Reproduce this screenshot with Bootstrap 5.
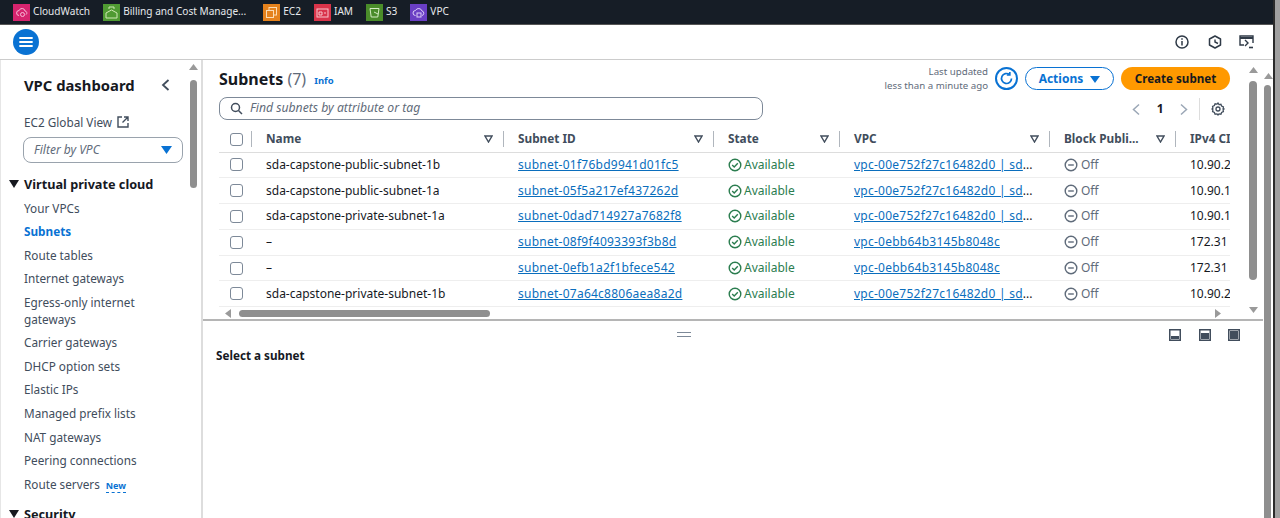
<!DOCTYPE html>
<html lang="en">
<head>
<meta charset="utf-8">
<title>Subnets | VPC Console</title>
<link href="https://cdn.jsdelivr.net/npm/bootstrap@5.3.0/dist/css/bootstrap.min.css" rel="stylesheet">
<style>
html,body{height:518px;overflow:hidden;background:#9a9a9a}
body{font-family:"Noto Sans","Open Sans",sans-serif;font-size:12px;color:#16191f}
.frame{height:518px}
.shell{width:1273px;flex:none;background:#fff}
.edge{width:2px;background:#2b2b2b;flex:none}
.tail{flex:1;background:#a0a0a0}
.svcbar{height:25px;background:#161d26;border-bottom:1px solid #555;color:#e6e9ec;font-size:10.1px;padding-left:13px;flex:none}
.svc{display:flex;align-items:center;gap:3px;margin-right:13px;white-space:nowrap}
.svc svg{display:block}
.svcwide{margin-right:17px}
.topbar{height:35px;border-bottom:1px solid #ccc;flex:none;padding-left:13px;padding-right:18px}
.burger{width:26px;height:26px;border-radius:50%;background:#0972d3;display:flex;align-items:center;justify-content:center}
.ticons{gap:17px}
.ticons svg:last-child{margin-left:-2px}
.sidewrap{width:203px;flex:none;border-right:2px solid #ddd;border-left:1px solid #e6e6e6;overflow:hidden}
.sidenav{width:188px;flex:none;overflow:hidden;padding-left:23px;padding-top:13px;color:#414d5c;font-size:11.75px}
.navtitle{font-size:14.8px;font-weight:700;color:#16191f;line-height:24px;width:146px}
.gview{line-height:16px;margin-top:17px}
.vfilter{width:160px;height:26px;border:1px solid #9aa3ad;border-radius:8px;margin-top:7px;margin-left:-1px;padding:0 10px;font-style:italic;color:#5f6b7a;font-size:12px}
.navhead{font-weight:700;font-size:12.7px;color:#16191f;line-height:18px;position:relative}
.navhead .caret{position:absolute;left:-15px;top:5px}
.navlist{margin:0;padding:0;list-style:none}
.navlist li{line-height:17px;padding:3.27px 0;width:130px}
.navlist .on{color:#0972d3;font-weight:700}
.newtag{font-size:9px;font-weight:700;color:#0972d3;border-bottom:1px dashed #0972d3;margin-left:6px}
.sbar{width:8px;flex:none;display:flex;flex-direction:column;align-items:center}
.thumb{width:7px;background:#8f8f8f;border-radius:4px}
.thumbh{height:7px;background:#8f8f8f;border-radius:4px}
.upper{height:261px;flex:none;border-bottom:2px solid #b5b5b5}
.pane{width:1046px;flex:none;padding-left:16px;padding-right:19px;display:flex;flex-direction:column}
.headrow{height:37px;flex:none}
.paneh1{font-size:16px;font-weight:700;color:#16191f;line-height:22px}
.paneh1 span.cnt{font-weight:400;color:#5f6b7a}
.infolink{font-size:9.5px;font-weight:700;color:#0972d3;margin-left:8px;line-height:18px}
.lastup{font-size:9.7px;line-height:14px;color:#5f6b7a;text-align:right;margin-right:7px}
.refresh{width:23px;height:23px;border-radius:50%;border:2px solid #0972d3;background:#fff;padding:0;display:flex;align-items:center;justify-content:center}
.btnact{height:23px;width:89px;border:1.5px solid #0972d3;border-radius:12px;color:#0972d3;font-weight:700;font-size:12px;padding:0;background:#fff;margin-left:7px}
.btncreate{height:23px;width:109px;border:0;border-radius:12px;background:#ff9900;color:#16191f;font-weight:700;font-size:11.6px;padding:0;margin-left:7px}
.searchrow{height:30px;flex:none}
.finder{width:544px;height:23px;border:1px solid #7d8998;border-radius:8px;padding:0 10px;font-style:italic;color:#5f6b7a;gap:7px;font-size:12.2px}
.pager{color:#16191f;font-weight:700;margin-top:1px;margin-right:5px}
.pagenum{margin:0 16.5px 0 17px}
.pagesep{width:1px;height:22px;background:#ddd;margin:0 11px}
.grid{table-layout:fixed;width:1011px;margin:0;font-size:12px;color:#16191f;--bs-table-bg:transparent}
.tablebox{width:1011px;overflow:hidden;height:180px;flex:none}
.grid th,.grid td{padding:0 0 0 14px;vertical-align:middle;white-space:nowrap;overflow:hidden;height:25.8px;border-bottom:1px solid #eee}
.grid th{height:25px;font-weight:700;font-size:11.8px;color:#414d5c;border-bottom:1px solid #ddd;position:relative}
.grid .chk{padding-left:11px}
.grid .form-check-input{width:13px;height:13px;margin:0;border:1px solid #7d8998;border-radius:3px;display:block}
.thin{display:flex;align-items:center;justify-content:space-between;padding-right:11px}
.thin::after{content:"";position:absolute;right:0;top:4px;height:16px;width:1px;background:#b0b6bd}
.thin svg{order:0}
.grid a{color:#0a6ebd;text-decoration:underline;letter-spacing:.25px}
.okst{color:#2b7d4f;display:flex;align-items:center;gap:2px}
.offst{color:#5f6b7a;display:flex;align-items:center;gap:3px}
.hscroll{height:12px;flex:none;padding-left:6px;padding-right:9px}
.lower{flex:1}
.grip{width:14px;height:5px;border-top:1px solid #7d8998;border-bottom:1px solid #7d8998}
.lowtop{height:27px;padding-left:13px;padding-right:23px}
.splitgrip{flex:1;display:flex;justify-content:center;padding-right:18px;margin-top:-1px}
.paneicons{gap:17.500px}
.selecttitle{font-weight:700;padding-left:13px;margin-top:-2px;line-height:18px;color:#16191f;font-size:11.7px}
.pageb{width:10px;flex:none;display:flex;flex-direction:column;align-items:flex-start;padding-left:1px;background:#fff}
</style>
</head>
<body>
<div class="frame d-flex">
  <div class="shell d-flex flex-column">
    <div class="svcbar d-flex align-items-center">
      <div class="svc"><svg width="17" height="17" viewBox="0 0 17 17"><rect width="17" height="17" fill="#d6246e"/><path d="M6 11.500a2.500 2.500 0 0 1 .2-5A3 3 0 0 1 12 7a2 2 0 0 1 1 3.600" fill="none" stroke="#f6b9d6" stroke-width="1"/><circle cx="9.500" cy="10.500" r="2" fill="none" stroke="#f6b9d6"/></svg><span>CloudWatch</span></div>
      <div class="svc svcwide"><svg width="17" height="17" viewBox="0 0 17 17"><rect width="17" height="17" fill="#4f9a32"/><path d="M3 9l5.500-3 5.500 3v5H3zM6 5V3h5v2" fill="none" stroke="#cfe8b4" stroke-width="1"/></svg><span>Billing and Cost Manage...</span></div>
      <div class="svc"><svg width="17" height="17" viewBox="0 0 17 17"><rect width="17" height="17" fill="#e5821c"/><rect x="6" y="3.500" width="7.500" height="7.500" fill="none" stroke="#fbdcb4"/><rect x="3.500" y="6.500" width="7" height="7" fill="#e5821c" stroke="#fbdcb4"/></svg><span>EC2</span></div>
      <div class="svc"><svg width="17" height="17" viewBox="0 0 17 17"><rect width="17" height="17" fill="#d9344a"/><rect x="3" y="5" width="11" height="8" fill="none" stroke="#f8c4cb"/><path d="M5 8h3v3H5zM10 9h2" fill="none" stroke="#f8c4cb"/></svg><span>IAM</span></div>
      <div class="svc"><svg width="17" height="17" viewBox="0 0 17 17"><rect width="17" height="17" fill="#4a8c2a"/><path d="M4 4.500h9l-1.200 8.500H5.200zM8 8l4 2" fill="none" stroke="#d5ecc4"/></svg><span>S3</span></div>
      <div class="svc"><svg width="17" height="17" viewBox="0 0 17 17"><rect width="17" height="17" fill="#6a3fc4"/><path d="M5.500 11.500a2.500 2.500 0 0 1 0-5A3.500 3.500 0 0 1 12 7a2.300 2.300 0 0 1 0 4.500" fill="none" stroke="#dccff7"/><rect x="7" y="9" width="4" height="4" fill="none" stroke="#dccff7"/></svg><span>VPC</span></div>
    </div>
    <div class="topbar d-flex align-items-center justify-content-between">
      <div class="burger"><svg width="14" height="12" viewBox="0 0 14 12"><path d="M1 2h12M1 6h12M1 10h12" stroke="#fff" stroke-width="1.800" stroke-linecap="round"/></svg></div>
      <div class="d-flex align-items-center ticons">
        <svg width="16" height="16" viewBox="0 0 16 16" fill="none" stroke="#2f3a47" stroke-width="1.500"><circle cx="8" cy="8" r="6"/><path d="M8 7v4.500M8 4.300v1.400"/></svg>
        <svg width="16" height="16" viewBox="0 0 16 16" fill="none" stroke="#2f3a47" stroke-width="1.500"><path d="M8 2l5.500 3v6L8 14l-5.500-3V5z" stroke-linejoin="round"/><path d="M8 5.500v2.500l3 1.500" stroke-width="1.400"/></svg>
        <svg width="17" height="16" viewBox="0 0 17 16" fill="none" stroke="#2f3a47" stroke-width="1.400"><path d="M6 11H2V2h13v7"/><path d="M2 4h13" stroke-width="2"/><path d="M7 6l3 3-3 3"/><path d="M11 13.500h4" stroke-width="1.600"/></svg>
      </div>
    </div>
    <div class="d-flex flex-grow-1" style="min-height:0">
      <div class="sidewrap d-flex">
        <nav class="sidenav">
          <div class="d-flex align-items-center justify-content-between navtitle">VPC dashboard<svg width="9" height="14" viewBox="0 0 9 14" fill="none" stroke="#414d5c" stroke-width="1.800"><path d="M7.500 2L2 7l5.500 5"/></svg></div>
          <div class="gview d-flex align-items-center gap-1">EC2 Global View<svg width="14" height="14" viewBox="0 0 14 14" fill="none" stroke="#414d5c" stroke-width="1.400"><path d="M6 2H2v10h10V8M8 2h4v4M12 2L6.500 7.500"/></svg></div>
          <div class="vfilter d-flex align-items-center justify-content-between">Filter by VPC<svg width="11" height="8" viewBox="0 0 11 8"><path d="M0 0h11L5.500 8z" fill="#0972d3"/></svg></div>
          <div class="navhead" style="margin-top:12px"><svg class="caret" width="10" height="8" viewBox="0 0 10 8"><path d="M0 0h10L5 8z" fill="#16191f"/></svg>Virtual private cloud</div>
          <ul class="navlist" style="margin-top:3.500px">
            <li>Your VPCs</li><li class="on">Subnets</li><li>Route tables</li><li>Internet gateways</li><li>Egress-only internet gateways</li><li>Carrier gateways</li><li>DHCP option sets</li><li>Elastic IPs</li><li style="white-space:nowrap">Managed prefix lists</li><li>NAT gateways</li><li style="white-space:nowrap">Peering connections</li><li style="white-space:nowrap">Route servers<span class="newtag">New</span></li>
          </ul>
          <div class="navhead" style="margin-top:8px"><svg class="caret" width="10" height="8" viewBox="0 0 10 8"><path d="M0 0h10L5 8z" fill="#16191f"/></svg>Security</div>
        </nav>
        <div class="sbar" style="padding-top:4px"><svg width="9" height="6" viewBox="0 0 9 6"><path d="M0 6h9L4.500 0z" fill="#9a9a9a"/></svg><div class="thumb" style="height:108px;margin-top:10px"></div></div>
      </div>
      <main class="d-flex flex-column" style="width:1060px;flex:none">
        <div class="upper d-flex">
          <section class="pane">
            <div class="headrow d-flex justify-content-between align-items-center">
              <div class="d-flex align-items-end"><div class="paneh1">Subnets <span class="cnt">(7)</span></div><span class="infolink">Info</span></div>
              <div class="d-flex align-items-center">
                <div class="lastup">Last updated<br>less than a minute ago</div>
                <button class="refresh" type="button" aria-label="Refresh"><svg width="15" height="15" viewBox="0 0 15 15" fill="none" stroke="#0972d3" stroke-width="1.700"><path d="M12.500 7.500a5 5 0 1 1-2-4"/><path d="M10.800 1v3h-3"/></svg></button>
                <button class="btnact" type="button">Actions <svg class="ms-1" width="10" height="7" viewBox="0 0 10 7"><path d="M0 0h10L5 7z" fill="#0972d3"/></svg></button>
                <button class="btncreate" type="button">Create subnet</button>
              </div>
            </div>
            <div class="searchrow d-flex justify-content-between align-items-start">
              <div class="finder d-flex align-items-center"><svg width="13" height="13" viewBox="0 0 13 13" fill="none" stroke="#414d5c" stroke-width="1.500"><circle cx="5.500" cy="5.500" r="4"/><path d="M8.500 8.500l3.500 3.500"/></svg><span>Find subnets by attribute or tag</span></div>
              <div class="d-flex align-items-center pager">
                <svg width="8" height="13" viewBox="0 0 8 13" fill="none" stroke="#9ba7b6" stroke-width="1.500"><path d="M7 1.500L1.500 6.500l5.500 5"/></svg>
                <span class="pagenum">1</span>
                <svg width="8" height="13" viewBox="0 0 8 13" fill="none" stroke="#9ba7b6" stroke-width="1.500"><path d="M1 1.500l5.500 5-5.500 5"/></svg>
                <span class="pagesep"></span>
                <svg width="14" height="14" viewBox="0 0 14 14" fill="none" stroke="#414d5c" stroke-width="1.300"><path d="M7 1l1 1.600 1.900-.3.700 1.800 1.800.7-.3 1.900L13 7l-.9.800.3 1.900-1.800.7-.7 1.800-1.900-.3L7 13l-1-1.100-1.900.3-.7-1.800-1.800-.7.3-1.900L1 7l.9-.8-.3-1.900 1.800-.7.7-1.800 1.900.3z"/><circle cx="7" cy="7" r="2"/></svg>
              </div>
            </div>
            <div class="tablebox">
              <table class="table table-borderless grid">
                <colgroup><col style="width:33px"><col style="width:252px"><col style="width:210px"><col style="width:126px"><col style="width:210px"><col style="width:126px"><col style="width:54px"></colgroup>
                <thead><tr>
                  <th class="chk"><div class="thin" style="padding:0"><input class="form-check-input" type="checkbox" aria-label="Select all"></div></th>
                  <th><div class="thin">Name<svg width="9" height="8" viewBox="0 0 9 8"><path d="M1 1h7L4.500 7z" fill="none" stroke="#414d5c" stroke-width="1.400"/></svg></div></th>
                  <th><div class="thin">Subnet ID<svg width="9" height="8" viewBox="0 0 9 8"><path d="M1 1h7L4.500 7z" fill="none" stroke="#414d5c" stroke-width="1.400"/></svg></div></th>
                  <th><div class="thin">State<svg width="9" height="8" viewBox="0 0 9 8"><path d="M1 1h7L4.500 7z" fill="none" stroke="#414d5c" stroke-width="1.400"/></svg></div></th>
                  <th><div class="thin">VPC<svg width="9" height="8" viewBox="0 0 9 8"><path d="M1 1h7L4.500 7z" fill="none" stroke="#414d5c" stroke-width="1.400"/></svg></div></th>
                  <th><div class="thin">Block Publi...<svg width="9" height="8" viewBox="0 0 9 8"><path d="M1 1h7L4.500 7z" fill="none" stroke="#414d5c" stroke-width="1.400"/></svg></div></th>
                  <th>IPv4 CI</th>
                </tr></thead>
                <tbody>
                  <tr><td class="chk"><input class="form-check-input" type="checkbox" aria-label="Select row"></td><td>sda-capstone-public-subnet-1b</td><td><a href="#">subnet-01f76bd9941d01fc5</a></td><td><span class="okst"><svg width="14" height="14" viewBox="0 0 14 14" fill="none" stroke="#2b7d4f" stroke-width="1.400"><circle cx="7" cy="7" r="5.800"/><path d="M4.200 7l2 2 3.600-3.800"/></svg>Available</span></td><td><a href="#">vpc-00e752f27c16482d0 | sd</a>...</td><td><span class="offst"><svg width="14" height="14" viewBox="0 0 14 14" fill="none" stroke="#5f6b7a" stroke-width="1.400"><circle cx="7" cy="7" r="5.800"/><path d="M4.200 7h5.600"/></svg>Off</span></td><td>10.90.2</td></tr>
                  <tr><td class="chk"><input class="form-check-input" type="checkbox" aria-label="Select row"></td><td>sda-capstone-public-subnet-1a</td><td><a href="#">subnet-05f5a217ef437262d</a></td><td><span class="okst"><svg width="14" height="14" viewBox="0 0 14 14" fill="none" stroke="#2b7d4f" stroke-width="1.400"><circle cx="7" cy="7" r="5.800"/><path d="M4.200 7l2 2 3.600-3.800"/></svg>Available</span></td><td><a href="#">vpc-00e752f27c16482d0 | sd</a>...</td><td><span class="offst"><svg width="14" height="14" viewBox="0 0 14 14" fill="none" stroke="#5f6b7a" stroke-width="1.400"><circle cx="7" cy="7" r="5.800"/><path d="M4.200 7h5.600"/></svg>Off</span></td><td>10.90.1</td></tr>
                  <tr><td class="chk"><input class="form-check-input" type="checkbox" aria-label="Select row"></td><td>sda-capstone-private-subnet-1a</td><td><a href="#">subnet-0dad714927a7682f8</a></td><td><span class="okst"><svg width="14" height="14" viewBox="0 0 14 14" fill="none" stroke="#2b7d4f" stroke-width="1.400"><circle cx="7" cy="7" r="5.800"/><path d="M4.200 7l2 2 3.600-3.800"/></svg>Available</span></td><td><a href="#">vpc-00e752f27c16482d0 | sd</a>...</td><td><span class="offst"><svg width="14" height="14" viewBox="0 0 14 14" fill="none" stroke="#5f6b7a" stroke-width="1.400"><circle cx="7" cy="7" r="5.800"/><path d="M4.200 7h5.600"/></svg>Off</span></td><td>10.90.1</td></tr>
                  <tr><td class="chk"><input class="form-check-input" type="checkbox" aria-label="Select row"></td><td>–</td><td><a href="#">subnet-08f9f4093393f3b8d</a></td><td><span class="okst"><svg width="14" height="14" viewBox="0 0 14 14" fill="none" stroke="#2b7d4f" stroke-width="1.400"><circle cx="7" cy="7" r="5.800"/><path d="M4.200 7l2 2 3.600-3.800"/></svg>Available</span></td><td><a href="#">vpc-0ebb64b3145b8048c</a></td><td><span class="offst"><svg width="14" height="14" viewBox="0 0 14 14" fill="none" stroke="#5f6b7a" stroke-width="1.400"><circle cx="7" cy="7" r="5.800"/><path d="M4.200 7h5.600"/></svg>Off</span></td><td>172.31</td></tr>
                  <tr><td class="chk"><input class="form-check-input" type="checkbox" aria-label="Select row"></td><td>–</td><td><a href="#">subnet-0efb1a2f1bfece542</a></td><td><span class="okst"><svg width="14" height="14" viewBox="0 0 14 14" fill="none" stroke="#2b7d4f" stroke-width="1.400"><circle cx="7" cy="7" r="5.800"/><path d="M4.200 7l2 2 3.600-3.800"/></svg>Available</span></td><td><a href="#">vpc-0ebb64b3145b8048c</a></td><td><span class="offst"><svg width="14" height="14" viewBox="0 0 14 14" fill="none" stroke="#5f6b7a" stroke-width="1.400"><circle cx="7" cy="7" r="5.800"/><path d="M4.200 7h5.600"/></svg>Off</span></td><td>172.31</td></tr>
                  <tr><td class="chk"><input class="form-check-input" type="checkbox" aria-label="Select row"></td><td>sda-capstone-private-subnet-1b</td><td><a href="#">subnet-07a64c8806aea8a2d</a></td><td><span class="okst"><svg width="14" height="14" viewBox="0 0 14 14" fill="none" stroke="#2b7d4f" stroke-width="1.400"><circle cx="7" cy="7" r="5.800"/><path d="M4.200 7l2 2 3.600-3.800"/></svg>Available</span></td><td><a href="#">vpc-00e752f27c16482d0 | sd</a>...</td><td><span class="offst"><svg width="14" height="14" viewBox="0 0 14 14" fill="none" stroke="#5f6b7a" stroke-width="1.400"><circle cx="7" cy="7" r="5.800"/><path d="M4.200 7h5.600"/></svg>Off</span></td><td>10.90.2</td></tr>
                </tbody>
              </table>
            </div>
            <div class="hscroll d-flex align-items-center justify-content-between">
              <div class="d-flex align-items-center"><svg width="6" height="9" viewBox="0 0 6 9"><path d="M6 0v9L0 4.500z" fill="#9a9a9a"/></svg><div class="thumbh" style="width:251px;margin-left:8px"></div></div>
              <svg width="6" height="9" viewBox="0 0 6 9"><path d="M0 0v9l6-4.500z" fill="#9a9a9a"/></svg>
            </div>
          </section>
          <div class="sbar" style="padding-top:7px"><svg width="9" height="6" viewBox="0 0 9 6"><path d="M0 6h9L4.500 0z" fill="#9a9a9a"/></svg><div class="thumb" style="height:199px;margin-top:8px;width:8px"></div><svg class="mt-auto" style="margin-bottom:6px" width="9" height="6" viewBox="0 0 9 6"><path d="M0 0h9L4.500 6z" fill="#9a9a9a"/></svg></div>
        </div>
        <section class="lower">
          <div class="lowtop d-flex align-items-center">
            <div class="splitgrip"><div class="grip"></div></div>
            <div class="d-flex paneicons">
              <svg width="12" height="12" viewBox="0 0 12 12"><rect x=".75" y=".75" width="10.500" height="10.500" fill="none" stroke="#414d5c" stroke-width="1.500"/><rect x="2" y="7" width="8" height="3" fill="#414d5c"/></svg>
              <svg width="12" height="12" viewBox="0 0 12 12"><rect x=".75" y=".75" width="10.500" height="10.500" fill="none" stroke="#414d5c" stroke-width="1.500"/><rect x="2" y="4" width="8" height="6" fill="#414d5c"/></svg>
              <svg width="12" height="12" viewBox="0 0 12 12"><rect x=".75" y=".75" width="10.500" height="10.500" fill="none" stroke="#414d5c" stroke-width="1.500"/><rect x="2" y="2" width="8" height="8" fill="#414d5c"/></svg>
            </div>
          </div>
          <div class="selecttitle">Select a subnet</div>
        </section>
      </main>
      <div class="pageb"><svg style="margin-top:13px" width="9" height="6" viewBox="0 0 9 6"><path d="M0 6h9L4.500 0z" fill="#9a9a9a"/></svg><div class="thumb" style="flex:1;margin-top:6px;border-radius:4px 4px 0 0"></div></div>
    </div>
  </div>
  <div class="edge"></div>
  <div class="tail"></div>
</div>
<script src="https://cdn.jsdelivr.net/npm/bootstrap@5.3.0/dist/js/bootstrap.bundle.min.js"></script>
</body>
</html>
